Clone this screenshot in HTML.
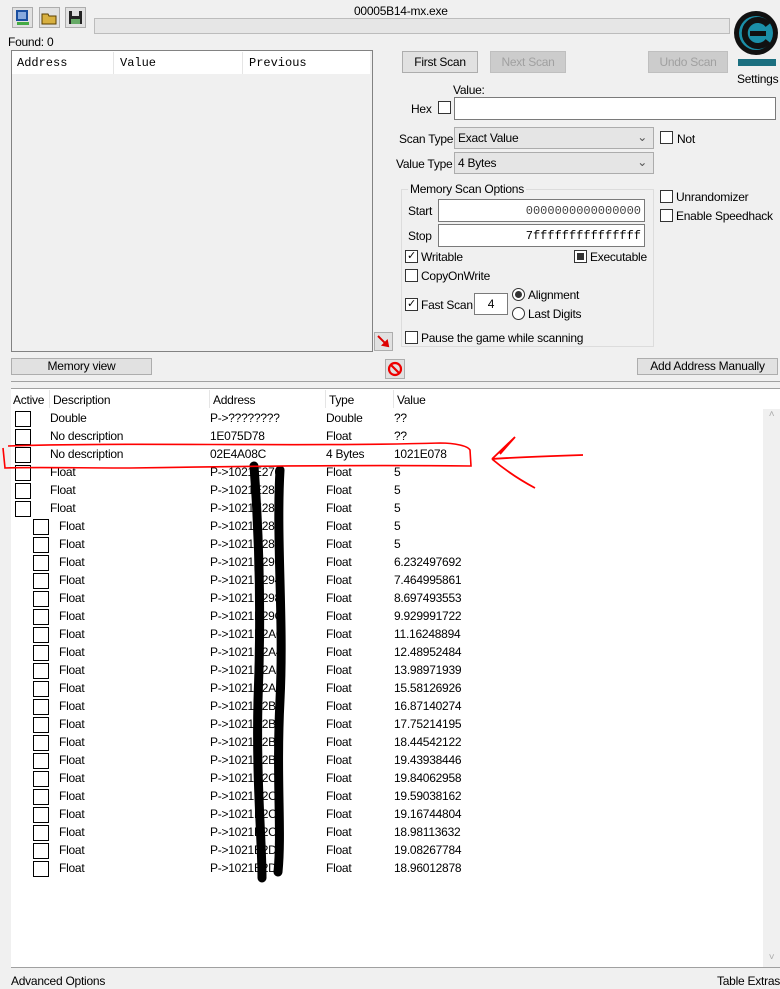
<!DOCTYPE html>
<html><head><meta charset="utf-8"><style>
*{margin:0;padding:0;box-sizing:border-box}
body{width:780px;height:989px;background:#f0f0f0;font-family:"Liberation Sans",sans-serif;font-size:12px;letter-spacing:-0.25px;color:#000;position:relative;overflow:hidden}
.a{position:absolute;white-space:nowrap}
.btn{position:absolute;background:#e1e1e1;border:1px solid #adadad;text-align:center;white-space:nowrap}
.dis{color:#a0a0a0;background:#cccccc;border-color:#bfbfbf}
.cb{position:absolute;width:13px;height:13px;border:1px solid #333;background:#fff}
.inp{position:absolute;background:#fff;border:1px solid #7a7a7a}
.sel{position:absolute;background:#e5e5e5;border:1px solid #acacac;padding:3px 3px}
.mono{font-family:"Liberation Mono",monospace;letter-spacing:0}
.row{position:absolute;left:0;height:18px;width:760px}
.row .c{position:absolute;top:2px;width:16px;height:16px;border:1px solid #000;background:#fff}
.row span{position:absolute;top:2px;white-space:nowrap}
.row span.ad{width:68px;overflow:hidden}
</style></head><body>
<div class="a" style="left:12px;top:7px;width:21px;height:21px;border:1px solid #adadad;background:#e1e1e1"><svg width="19" height="19"><rect x="3" y="2" width="12" height="11" fill="#1a4fa0"/><rect x="5" y="4" width="8" height="7" fill="#8ad"/><rect x="4" y="14" width="12" height="3" fill="#4a4"/></svg></div>
<div class="a" style="left:39px;top:7px;width:21px;height:21px;border:1px solid #adadad;background:#e1e1e1"><svg width="19" height="19"><path d="M2 6h6l1 2h7v8H2z" fill="#d8b040" stroke="#5a4000"/></svg></div>
<div class="a" style="left:65px;top:7px;width:21px;height:21px;border:1px solid #adadad;background:#e1e1e1"><svg width="19" height="19"><rect x="3" y="3" width="13" height="13" fill="#222"/><rect x="6" y="3" width="7" height="5" fill="#ddd"/><rect x="5" y="11" width="9" height="5" fill="#6a6"/></svg></div>
<div class="a" style="left:354px;top:4px">00005B14-mx.exe</div>
<div class="a" style="left:94px;top:18px;width:636px;height:16px;border:1px solid #bcbcbc;background:#e6e6e6"></div>
<svg class="a" style="left:733px;top:3px" width="46" height="66"><circle cx="23" cy="30" r="22" fill="#111"/><circle cx="23" cy="30" r="17" fill="#1b8fa8"/><path d="M35 22 A13 13 0 1 0 35 38" stroke="#111" stroke-width="6" fill="none"/><rect x="17" y="28" width="16" height="5" fill="#111"/><rect x="5" y="56" width="38" height="7" fill="#1b6f80"/></svg>
<div class="a" style="left:737px;top:72px">Settings</div>
<div class="a" style="left:8px;top:35px">Found: 0</div>
<div class="a" style="left:11px;top:50px;width:362px;height:302px;border:1px solid #828282;background:#f0f0f0"></div>
<div class="a mono" style="left:12px;top:51px;width:358px;height:23px;background:#fff"></div>
<div class="a" style="left:113px;top:52px;width:1px;height:22px;background:#e5e5e5"></div>
<div class="a" style="left:242px;top:52px;width:1px;height:22px;background:#e5e5e5"></div>
<div class="a mono" style="left:17px;top:56px">Address</div>
<div class="a mono" style="left:120px;top:56px">Value</div>
<div class="a mono" style="left:249px;top:56px">Previous</div>
<div class="btn" style="left:402px;top:51px;width:76px;height:22px;line-height:20px">First Scan</div>
<div class="btn dis" style="left:490px;top:51px;width:76px;height:22px;line-height:20px">Next Scan</div>
<div class="btn dis" style="left:648px;top:51px;width:80px;height:22px;line-height:20px">Undo Scan</div>
<div class="a" style="left:453px;top:83px">Value:</div>
<div class="a" style="left:411px;top:102px">Hex</div>
<div class="cb" style="left:438px;top:101px"></div>
<div class="inp" style="left:454px;top:97px;width:322px;height:23px"></div>
<div class="a" style="left:399px;top:132px">Scan Type</div>
<div class="sel" style="left:454px;top:127px;width:200px;height:22px">Exact Value<span style="position:absolute;right:6px;top:2px;color:#555">&#8964;</span></div>
<div class="cb" style="left:660px;top:131px"></div><div class="a" style="left:677px;top:132px">Not</div>
<div class="a" style="left:396px;top:157px">Value Type</div>
<div class="sel" style="left:454px;top:152px;width:200px;height:22px">4 Bytes<span style="position:absolute;right:6px;top:2px;color:#555">&#8964;</span></div>
<div class="a" style="left:401px;top:189px;width:253px;height:158px;border:1px solid #dcdcdc"></div>
<div class="a" style="left:408px;top:182px;background:#f0f0f0;padding:0 2px">Memory Scan Options</div>
<div class="a" style="left:408px;top:204px">Start</div>
<div class="inp mono" style="left:438px;top:199px;width:207px;height:23px;text-align:right;padding:4px 3px;color:#444">0000000000000000</div>
<div class="a" style="left:408px;top:229px">Stop</div>
<div class="inp mono" style="left:438px;top:224px;width:207px;height:23px;text-align:right;padding:4px 3px">7fffffffffffffff</div>
<div class="cb" style="left:405px;top:250px;font-size:11px;line-height:11px;text-align:center">&#10003;</div><div class="a" style="left:421px;top:250px">Writable</div>
<div class="cb" style="left:574px;top:250px"><div style="margin:2px;width:7px;height:7px;background:#333"></div></div><div class="a" style="left:590px;top:250px">Executable</div>
<div class="cb" style="left:405px;top:269px"></div><div class="a" style="left:421px;top:269px">CopyOnWrite</div>
<div class="cb" style="left:405px;top:298px;font-size:11px;line-height:11px;text-align:center">&#10003;</div><div class="a" style="left:421px;top:298px">Fast Scan</div>
<div class="inp" style="left:474px;top:293px;width:34px;height:22px;text-align:center;line-height:20px">4</div>
<div class="a" style="left:512px;top:288px;width:13px;height:13px;border:1px solid #333;border-radius:50%;background:#fff"><div style="margin:2px;width:7px;height:7px;border-radius:50%;background:#333"></div></div>
<div class="a" style="left:528px;top:288px">Alignment</div>
<div class="a" style="left:512px;top:307px;width:13px;height:13px;border:1px solid #333;border-radius:50%;background:#fff"></div>
<div class="a" style="left:528px;top:307px">Last Digits</div>
<div class="cb" style="left:405px;top:331px"></div><div class="a" style="left:421px;top:331px">Pause the game while scanning</div>
<div class="cb" style="left:660px;top:190px"></div><div class="a" style="left:676px;top:190px">Unrandomizer</div>
<div class="cb" style="left:660px;top:209px"></div><div class="a" style="left:676px;top:209px">Enable Speedhack</div>
<div class="a" style="left:374px;top:332px;width:19px;height:19px;border:1px solid #adadad;background:#e1e1e1"><svg width="17" height="17"><path d="M3 3l10 10M13 13l-5-1 4-4z" stroke="#d00" stroke-width="2" fill="#d00"/></svg></div>
<div class="btn" style="left:11px;top:358px;width:141px;height:17px;line-height:15px">Memory view</div>
<div class="a" style="left:385px;top:359px;width:20px;height:20px;border:1px solid #adadad;background:#e1e1e1"><svg width="18" height="18"><circle cx="9" cy="9" r="6" stroke="#e00" stroke-width="2.2" fill="none"/><path d="M5 5l8 8" stroke="#e00" stroke-width="2.2"/></svg></div>
<div class="btn" style="left:637px;top:358px;width:141px;height:17px;line-height:15px">Add Address Manually</div>
<div class="a" style="left:11px;top:381px;width:769px;height:1px;background:#a0a0a0"></div>
<div class="a" style="left:11px;top:388px;width:769px;height:580px;background:#fff;border-top:1px solid #a0a0a0;border-bottom:1px solid #a0a0a0"></div>
<div class="a" style="left:763px;top:409px;width:17px;height:558px;background:#f0f0f0;color:#aaa;font-size:10px;text-align:center">&#708;</div>
<div class="a" style="left:763px;top:952px;width:17px;color:#aaa;font-size:10px;text-align:center">&#709;</div>
<div class="a" style="left:13px;top:393px">Active</div>
<div class="a" style="left:49px;top:390px;width:1px;height:18px;background:#e5e5e5"></div>
<div class="a" style="left:53px;top:393px">Description</div>
<div class="a" style="left:209px;top:390px;width:1px;height:18px;background:#e5e5e5"></div>
<div class="a" style="left:213px;top:393px">Address</div>
<div class="a" style="left:325px;top:390px;width:1px;height:18px;background:#e5e5e5"></div>
<div class="a" style="left:329px;top:393px">Type</div>
<div class="a" style="left:393px;top:390px;width:1px;height:18px;background:#e5e5e5"></div>
<div class="a" style="left:397px;top:393px">Value</div>
<div class="row" style="top:409px"><div class="c" style="left:15px"></div><span style="left:50px">Double</span><span style="left:210px">P-&gt;????????</span><span style="left:326px">Double</span><span style="left:394px">??</span></div>
<div class="row" style="top:427px"><div class="c" style="left:15px"></div><span style="left:50px">No description</span><span style="left:210px">1E075D78</span><span style="left:326px">Float</span><span style="left:394px">??</span></div>
<div class="row" style="top:445px"><div class="c" style="left:15px"></div><span style="left:50px">No description</span><span style="left:210px">02E4A08C</span><span style="left:326px">4 Bytes</span><span style="left:394px">1021E078</span></div>
<div class="row" style="top:463px"><div class="c" style="left:15px"></div><span style="left:50px">Float</span><span class="ad" style="left:210px">P-&gt;1021E270</span><span style="left:326px">Float</span><span style="left:394px">5</span></div>
<div class="row" style="top:481px"><div class="c" style="left:15px"></div><span style="left:50px">Float</span><span class="ad" style="left:210px">P-&gt;1021E280</span><span style="left:326px">Float</span><span style="left:394px">5</span></div>
<div class="row" style="top:499px"><div class="c" style="left:15px"></div><span style="left:50px">Float</span><span class="ad" style="left:210px">P-&gt;1021E284</span><span style="left:326px">Float</span><span style="left:394px">5</span></div>
<div class="row" style="top:517px"><div class="c" style="left:33px"></div><span style="left:59px">Float</span><span class="ad" style="left:210px">P-&gt;1021E288</span><span style="left:326px">Float</span><span style="left:394px">5</span></div>
<div class="row" style="top:535px"><div class="c" style="left:33px"></div><span style="left:59px">Float</span><span class="ad" style="left:210px">P-&gt;1021E28C</span><span style="left:326px">Float</span><span style="left:394px">5</span></div>
<div class="row" style="top:553px"><div class="c" style="left:33px"></div><span style="left:59px">Float</span><span class="ad" style="left:210px">P-&gt;1021E290</span><span style="left:326px">Float</span><span style="left:394px">6.232497692</span></div>
<div class="row" style="top:571px"><div class="c" style="left:33px"></div><span style="left:59px">Float</span><span class="ad" style="left:210px">P-&gt;1021E294</span><span style="left:326px">Float</span><span style="left:394px">7.464995861</span></div>
<div class="row" style="top:589px"><div class="c" style="left:33px"></div><span style="left:59px">Float</span><span class="ad" style="left:210px">P-&gt;1021E298</span><span style="left:326px">Float</span><span style="left:394px">8.697493553</span></div>
<div class="row" style="top:607px"><div class="c" style="left:33px"></div><span style="left:59px">Float</span><span class="ad" style="left:210px">P-&gt;1021E29C</span><span style="left:326px">Float</span><span style="left:394px">9.929991722</span></div>
<div class="row" style="top:625px"><div class="c" style="left:33px"></div><span style="left:59px">Float</span><span class="ad" style="left:210px">P-&gt;1021E2A0</span><span style="left:326px">Float</span><span style="left:394px">11.16248894</span></div>
<div class="row" style="top:643px"><div class="c" style="left:33px"></div><span style="left:59px">Float</span><span class="ad" style="left:210px">P-&gt;1021E2A4</span><span style="left:326px">Float</span><span style="left:394px">12.48952484</span></div>
<div class="row" style="top:661px"><div class="c" style="left:33px"></div><span style="left:59px">Float</span><span class="ad" style="left:210px">P-&gt;1021E2A8</span><span style="left:326px">Float</span><span style="left:394px">13.98971939</span></div>
<div class="row" style="top:679px"><div class="c" style="left:33px"></div><span style="left:59px">Float</span><span class="ad" style="left:210px">P-&gt;1021E2AC</span><span style="left:326px">Float</span><span style="left:394px">15.58126926</span></div>
<div class="row" style="top:697px"><div class="c" style="left:33px"></div><span style="left:59px">Float</span><span class="ad" style="left:210px">P-&gt;1021E2B0</span><span style="left:326px">Float</span><span style="left:394px">16.87140274</span></div>
<div class="row" style="top:715px"><div class="c" style="left:33px"></div><span style="left:59px">Float</span><span class="ad" style="left:210px">P-&gt;1021E2B4</span><span style="left:326px">Float</span><span style="left:394px">17.75214195</span></div>
<div class="row" style="top:733px"><div class="c" style="left:33px"></div><span style="left:59px">Float</span><span class="ad" style="left:210px">P-&gt;1021E2B8</span><span style="left:326px">Float</span><span style="left:394px">18.44542122</span></div>
<div class="row" style="top:751px"><div class="c" style="left:33px"></div><span style="left:59px">Float</span><span class="ad" style="left:210px">P-&gt;1021E2BC</span><span style="left:326px">Float</span><span style="left:394px">19.43938446</span></div>
<div class="row" style="top:769px"><div class="c" style="left:33px"></div><span style="left:59px">Float</span><span class="ad" style="left:210px">P-&gt;1021E2C0</span><span style="left:326px">Float</span><span style="left:394px">19.84062958</span></div>
<div class="row" style="top:787px"><div class="c" style="left:33px"></div><span style="left:59px">Float</span><span class="ad" style="left:210px">P-&gt;1021E2C4</span><span style="left:326px">Float</span><span style="left:394px">19.59038162</span></div>
<div class="row" style="top:805px"><div class="c" style="left:33px"></div><span style="left:59px">Float</span><span class="ad" style="left:210px">P-&gt;1021E2C8</span><span style="left:326px">Float</span><span style="left:394px">19.16744804</span></div>
<div class="row" style="top:823px"><div class="c" style="left:33px"></div><span style="left:59px">Float</span><span class="ad" style="left:210px">P-&gt;1021E2CC</span><span style="left:326px">Float</span><span style="left:394px">18.98113632</span></div>
<div class="row" style="top:841px"><div class="c" style="left:33px"></div><span style="left:59px">Float</span><span class="ad" style="left:210px">P-&gt;1021E2D0</span><span style="left:326px">Float</span><span style="left:394px">19.08267784</span></div>
<div class="row" style="top:859px"><div class="c" style="left:33px"></div><span style="left:59px">Float</span><span class="ad" style="left:210px">P-&gt;1021E2D4</span><span style="left:326px">Float</span><span style="left:394px">18.96012878</span></div>
<svg class="a" style="left:0;top:0" width="780" height="989">
<path d="M254 466 C258 520 262 600 258 700 C256 780 262 840 262 878" stroke="#000" stroke-width="9" fill="none" stroke-linecap="round"/>
<path d="M280 470 C276 540 284 620 280 700 C276 780 282 830 278 872" stroke="#000" stroke-width="9" fill="none" stroke-linecap="round"/>
<path d="M8 446 C120 442 300 447 440 443 C455 443 468 446 470 450 L471 466 C380 465 250 466 130 468 C80 468 30 467 5 468 L3 448" stroke="#f00" stroke-width="1.6" fill="none"/>
<path d="M583 455 C550 456 520 457 492 459 M492 459 L515 437 L500 454 M492 459 C505 470 520 480 535 488" stroke="#f00" stroke-width="1.8" fill="none"/>
</svg>
<div class="a" style="left:11px;top:974px">Advanced Options</div>
<div class="a" style="left:717px;top:974px">Table Extras</div>
</body></html>
